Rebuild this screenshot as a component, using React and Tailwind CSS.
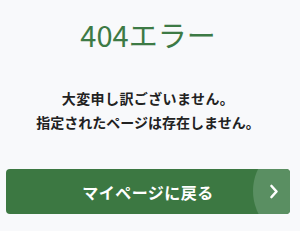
import React from "react";

export default function App() {
  return (
    <div
      className="w-[300px] h-[231px] bg-[#f8f9fb] flex flex-col items-center overflow-hidden"
      style={{ fontFamily: '"Noto Sans CJK JP", "Noto Sans", sans-serif' }}
    >
      <h1 className="mt-[17px] ml-[-4px] text-[29px] leading-[35px] font-normal text-[#3d7a45]">
        404エラー
      </h1>
      <div className="mt-[34px] ml-[-4px] text-center text-[14px] leading-[24px] font-bold text-[#222]">
        <p className="tracking-[0.4px]">大変申し訳ございません。</p>
        <p>指定されたページは存在しません。</p>
      </div>
      <div className="mt-[35px] w-full pl-[6px] pr-[10px]">
        <button className="relative w-full h-[45px] rounded-[4px] bg-[#3c7842] overflow-hidden flex items-center justify-center">
          <span className="text-white text-[16px] font-bold tracking-[0.5px]">
            マイページに戻る
          </span>
          <span className="absolute left-[247px] top-[-28px] w-[100px] h-[100px] rounded-full bg-[#5a8f62]" />
          <svg
            className="absolute left-[263px] top-[15px]"
            width="10"
            height="15"
            viewBox="0 0 10 15"
            fill="none"
          >
            <path d="M2.5 2 L7.5 7.5 L2.5 13" stroke="white" strokeWidth="2.6" strokeLinecap="round" strokeLinejoin="round" />
          </svg>
        </button>
      </div>
    </div>
  );
}
